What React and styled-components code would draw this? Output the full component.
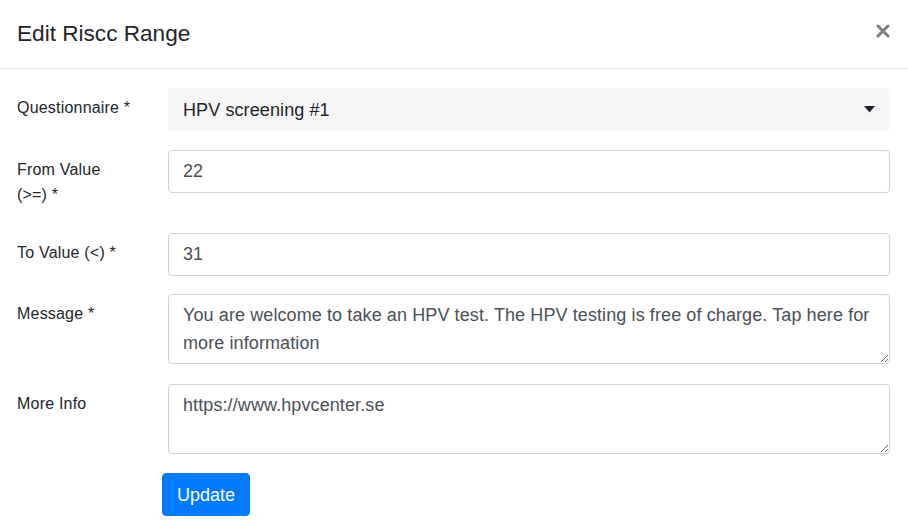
import styled, { createGlobalStyle } from "styled-components";

const GlobalStyle = createGlobalStyle`
  html, body {
    margin: 0;
    padding: 0;
    background: #fff;
  }
  body {
    font-family: "Liberation Sans", Arial, sans-serif;
    color: #212529;
  }
  * {
    box-sizing: border-box;
  }
`

const Modal = styled.section`
  width: 908px;
  min-height: 532px;
  background: #fff;
`

const Header = styled.header`
  display: flex;
  align-items: center;
  justify-content: space-between;
  height: 69px;
  padding: 0 18px 0 17px;
  border-bottom: 1px solid #e9ecef;
`

const Title = styled.h5`
  margin: 0;
  font-size: 22.6px;
  font-weight: 400;
  color: #212529;
`

const Close = styled.button`
  border: none;
  background: none;
  padding: 0;
  color: #000;
  opacity: 0.5;
  cursor: pointer;
  display: flex;
  margin-top: -6px;
`

const Body = styled.form`
  padding: 19px 18px 16px 17px;
`

const Row = styled.div`
  display: grid;
  grid-template-columns: 151px 1fr;
  align-items: start;
  margin-bottom: ${(p) => p.$gap || 20}px;
`

const Label = styled.label`
  display: block;
  padding: 7px 35px 7px 0;
  font-size: 16px;
  letter-spacing: 0.2px;
  line-height: 25px;
  color: #212529;
`

const fieldBase = `
  display: block;
  width: 100%;
  font-family: "Liberation Sans", Arial, sans-serif;
  font-size: 18px;
  letter-spacing: 0.1px;
  line-height: 28px;
  color: #495057;
  padding: 6px 14px;
  border-radius: 4px;
  outline: none;
`

const Select = styled.div`
  ${fieldBase}
  display: flex;
  align-items: center;
  justify-content: space-between;
  height: 43px;
  background: #f5f6f7;
  border: 1px solid #f5f6f7;
  color: #212529;
  cursor: pointer;
`

const Input = styled.input`
  ${fieldBase}
  height: 43px;
  background: #fff;
  border: 1px solid #ced4da;
`

const TextArea = styled.textarea`
  ${fieldBase}
  height: 70px;
  background: #fff;
  border: 1px solid #ced4da;
  resize: vertical;
  overflow: hidden;
`

const Actions = styled.div`
  padding-left: 145px;
`

const Button = styled.button`
  font-family: "Liberation Sans", Arial, sans-serif;
  font-size: 18px;
  line-height: 28px;
  height: 43px;
  padding: 6px 14px;
  color: #fff;
  background: #007bff;
  border: 1px solid #007bff;
  border-radius: 4px;
  cursor: pointer;
`

const Caret = () => (
  <svg width="11" height="7" viewBox="0 0 11 7">
    <path d="M0 0h11L5.5 6.5z" fill="#212529" />
  </svg>
);

const CloseIcon = () => (
  <svg width="14" height="14" viewBox="0 0 14 14">
    <path d="M2 2l10 10M12 2L2 12" stroke="#000" strokeWidth="3" strokeLinecap="round" />
  </svg>
);

export default function App() {
  return (
    <Modal>
      <GlobalStyle />
      <Header>
        <Title>Edit Riscc Range</Title>
        <Close type="button" aria-label="Close">
          <CloseIcon />
        </Close>
      </Header>
      <Body onSubmit={(e) => e.preventDefault()}>
        <Row $gap={19}>
          <Label>Questionnaire *</Label>
          <Select>
            <span>HPV screening #1</span>
            <Caret />
          </Select>
        </Row>
        <Row $gap={19}>
          <Label htmlFor="from">From Value (&gt;=) *</Label>
          <Input id="from" defaultValue="22" />
        </Row>
        <Row $gap={18}>
          <Label htmlFor="to">To Value (&lt;) *</Label>
          <Input id="to" defaultValue="31" />
        </Row>
        <Row $gap={20}>
          <Label htmlFor="msg">Message *</Label>
          <TextArea
            id="msg"
            rows={2}
            defaultValue="You are welcome to take an HPV test. The HPV testing is free of charge. Tap here for more information"
          />
        </Row>
        <Row $gap={19}>
          <Label htmlFor="info">More Info</Label>
          <TextArea id="info" rows={2} defaultValue="https://www.hpvcenter.se" />
        </Row>
        <Actions>
          <Button type="submit">Update</Button>
        </Actions>
      </Body>
    </Modal>
  );
}
